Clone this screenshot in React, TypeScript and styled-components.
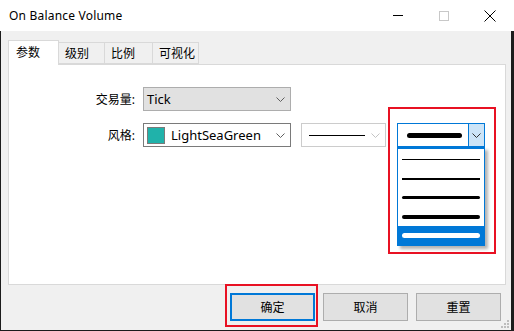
import React from "react";
import styled, { createGlobalStyle } from "styled-components";

const GlobalStyle = createGlobalStyle`
  html, body {
    margin: 0;
    padding: 0;
    background: #1c1c1c;
  }
  * {
    box-sizing: border-box;
  }
`;

const FONT = `"Segoe UI", "Noto Sans", "Noto Sans CJK SC", sans-serif`;

const Window = styled.div`
  width: 514px;
  height: 331px;
  display: flex;
  flex-direction: column;
  font-family: ${FONT};
  font-size: 12px;
  color: #000;
`;

const TitleBar = styled.div`
  height: 31px;
  background: #fff;
  display: flex;
  align-items: center;
  padding: 0 1px 0 9px;
`;

const Title = styled.span`
  font-size: 12px;
  letter-spacing: 0.2px;
`;

const Controls = styled.div`
  margin-left: auto;
  display: flex;
  height: 100%;
`;

const Ctrl = styled.div`
  width: 46px;
  height: 31px;
  display: flex;
  align-items: center;
  justify-content: center;
`;

const Body = styled.div`
  flex: 1;
  margin: 0 3px 1px 1px;
  background: #f0f0f0;
  padding: 9px 5px 0 7px;
  display: flex;
  flex-direction: column;
  position: relative;
`;

const Tabs = styled.div`
  display: flex;
  align-items: flex-end;
  height: 24px;
  position: relative;
  z-index: 1;
`;

const Tab = styled.div<{ $active?: boolean; $w: number }>`
  width: ${(p) => p.$w}px;
  height: ${(p) => (p.$active ? 25 : 22)}px;
  margin-bottom: ${(p) => (p.$active ? -1 : 0)}px;
  background: ${(p) => (p.$active ? "#fff" : "#f0f0f0")};
  border: 1px solid #d9d9d9;
  border-bottom: ${(p) => (p.$active ? "none" : "1px solid #d9d9d9")};
  margin-left: ${(p) => (p.$active ? 0 : -1)}px;
  display: flex;
  align-items: center;
  padding-left: ${(p) => (p.$active ? 7 : 6)}px;
  padding-bottom: ${(p) => (p.$active ? 3 : 0)}px;
  font-size: 12px;
  &:first-child {
    margin-left: 0;
  }
`;

const Panel = styled.div`
  height: 221px;
  background: #fff;
  border: 1px solid #d9d9d9;
  padding-top: 22px;
`;

const Form = styled.div`
  display: grid;
  grid-template-columns: 126px auto;
  column-gap: 8px;
  row-gap: 12px;
  align-items: center;
`;

const Label = styled.div`
  text-align: right;
  font-size: 12px;
`;

const Row = styled.div`
  display: flex;
  align-items: center;
`;

const Select = styled.div<{ $w: number; $variant?: "gray" | "white" | "disabled" | "focus"; $gap?: number }>`
  position: relative;
  width: ${(p) => p.$w}px;
  height: 24px;
  margin-left: ${(p) => p.$gap ?? 0}px;
  display: flex;
  align-items: center;
  padding-left: 3px;
  font-size: 13px;
  background: ${(p) => (p.$variant === "gray" ? "#e1e1e1" : "#fff")};
  border: 1px solid
    ${(p) =>
      p.$variant === "gray"
        ? "#adadad"
        : p.$variant === "disabled"
        ? "#cccccc"
        : p.$variant === "focus"
        ? "#0078d7"
        : "#7a7a7a"};
`;

const Chevron = styled.div`
  margin-left: auto;
  width: 20px;
  height: 100%;
  display: flex;
  align-items: center;
  justify-content: center;
`;

const DropBtn = styled(Chevron)`
  width: 16px;
  background: #cce4f7;
  border-left: 1px solid #0078d7;
`;

const Swatch = styled.div<{ $color: string }>`
  width: 18px;
  height: 17px;
  background: ${(p) => p.$color};
  border: 1px solid #7a7a7a;
  margin-right: 6px;
`;

const Line = styled.div<{ $w: number; $h: number; $color?: string; $ml?: number }>`
  width: ${(p) => p.$w}px;
  height: ${(p) => p.$h}px;
  margin-left: ${(p) => p.$ml ?? 0}px;
  background: ${(p) => p.$color ?? "#000"};
  border-radius: ${(p) => (p.$h > 2 ? p.$h / 2 : 0)}px;
`;

const List = styled.div`
  position: absolute;
  top: 23px;
  left: -1px;
  width: 88px;
  background: #fff;
  border: 1px solid #0078d7;
  border-top-width: 2px;
  box-shadow: 3px 3px 3px rgba(0, 0, 0, 0.3);
  padding-top: 1px;
  z-index: 3;
`;

const Item = styled.div<{ $sel?: boolean }>`
  height: 19px;
  display: flex;
  align-items: center;
  padding-left: 4px;
  background: ${(p) => (p.$sel ? "#0078d7" : "transparent")};
`;

const Mark = styled.div`
  position: absolute;
  border: 2px solid #e81123;
  pointer-events: none;
  z-index: 4;
`;

const Footer = styled.div`
  flex: 1;
  display: flex;
  justify-content: flex-end;
  align-items: flex-start;
  gap: 8px;
  padding: 8px 5px 0 0;
`;

const Button = styled.div<{ $default?: boolean }>`
  position: relative;
  width: 85px;
  height: 28px;
  background: #e1e1e1;
  border: ${(p) => (p.$default ? "2px solid #0078d7" : "1px solid #adadad")};
  display: flex;
  align-items: center;
  justify-content: center;
  font-size: 12px;
`;

const Grip = styled.svg`
  position: absolute;
  right: 2px;
  bottom: 2px;
`;

const Down = ({ color = "#5f5f5f" }: { color?: string }) => (
  <svg width="9" height="5" viewBox="0 0 9 5">
    <polyline points="0.5,0.5 4.5,4.5 8.5,0.5" fill="none" strokeWidth="1" stroke={color} />
  </svg>
);

export default function App() {
  const widths = [1, 2, 3, 4, 5];
  return (
    <>
      <GlobalStyle />
      <Window>
        <TitleBar>
          <Title>On Balance Volume</Title>
          <Controls>
            <Ctrl>
              <svg width="10" height="1">
                <rect width="10" height="1" fill="#000" />
              </svg>
            </Ctrl>
            <Ctrl>
              <svg width="10" height="10">
                <rect x="0.5" y="0.5" width="9" height="9" fill="none" stroke="#c8c8c8" />
              </svg>
            </Ctrl>
            <Ctrl>
              <svg width="12" height="12">
                <path d="M0.5 0.5 L11.5 11.5 M11.5 0.5 L0.5 11.5" stroke="#000" strokeWidth="1" />
              </svg>
            </Ctrl>
          </Controls>
        </TitleBar>
        <Body>
          <Tabs>
            <Tab $active $w={51}>参数</Tab>
            <Tab $w={47}>级别</Tab>
            <Tab $w={49}>比例</Tab>
            <Tab $w={47}>可视化</Tab>
          </Tabs>
          <Panel>
            <Form>
              <Label>交易量:</Label>
              <Row>
                <Select $w={148} $variant="gray">
                  Tick
                  <Chevron>
                    <Down />
                  </Chevron>
                </Select>
              </Row>
              <Label>风格:</Label>
              <Row>
                <Select $w={148} $variant="white">
                  <Swatch $color="#20b2aa" />
                  LightSeaGreen
                  <Chevron>
                    <Down />
                  </Chevron>
                </Select>
                <Select $w={85} $variant="disabled" $gap={10}>
                  <Line $w={57} $h={1} $ml={4} />
                  <Chevron>
                    <Down color="#c4c4c4" />
                  </Chevron>
                </Select>
                <Select $w={88} $variant="focus" $gap={11}>
                  <Line $w={55} $h={5} $ml={6} />
                  <DropBtn>
                    <Down color="#333" />
                  </DropBtn>
                  <List>
                    {widths.map((w) => (
                      <Item key={w} $sel={w === 5}>
                        <Line $w={78} $h={w} $color={w === 5 ? "#fff" : "#000"} />
                      </Item>
                    ))}
                  </List>
                  <Mark style={{ left: -10, top: -17, width: 108, height: 147 }} />
                </Select>
              </Row>
            </Form>
          </Panel>
          <Footer>
            <Button $default>
              确定
              <Mark style={{ left: -7, top: -11, width: 93, height: 43 }} />
            </Button>
            <Button>取消</Button>
            <Button>重置</Button>
          </Footer>
          <Grip width="8" height="8" viewBox="0 0 8 8">
            <rect x="6" y="0" width="2" height="2" fill="#bdbdbd" />
            <rect x="3" y="3" width="2" height="2" fill="#bdbdbd" />
            <rect x="6" y="3" width="2" height="2" fill="#bdbdbd" />
            <rect x="0" y="6" width="2" height="2" fill="#bdbdbd" />
            <rect x="3" y="6" width="2" height="2" fill="#bdbdbd" />
            <rect x="6" y="6" width="2" height="2" fill="#bdbdbd" />
          </Grip>
        </Body>
      </Window>
    </>
  );
}
